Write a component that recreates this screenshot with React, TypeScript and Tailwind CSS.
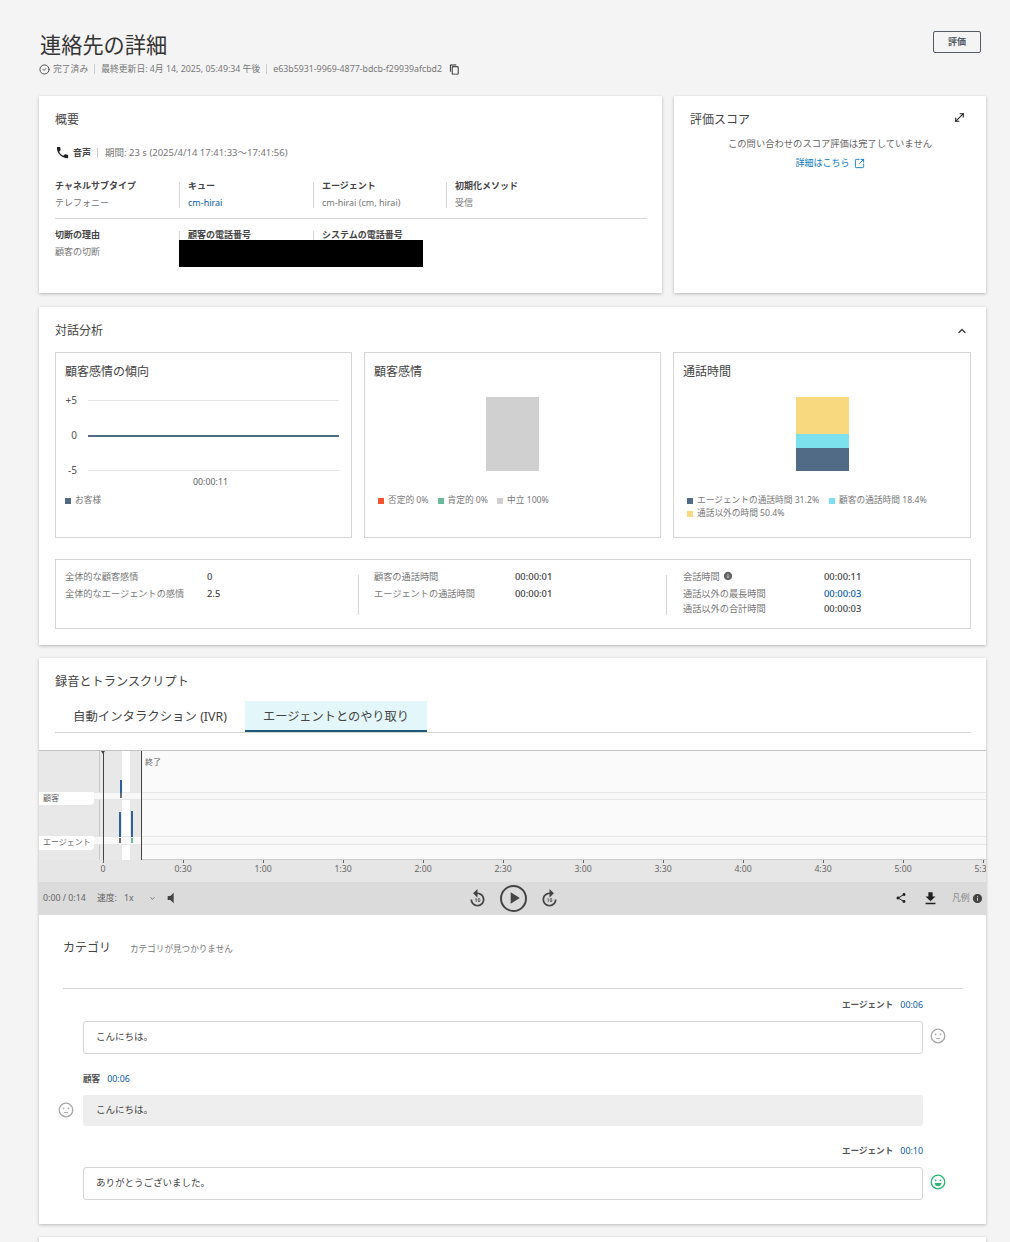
import { ChevronDown, ChevronUp, CircleCheck, MoveDiagonal, SquareArrowOutUpRight } from "lucide-react";
import {
  MdContentCopy,
  MdFileDownload,
  MdForward10,
  MdInfo,
  MdLocalPhone,
  MdPlayArrow,
  MdReplay10,
  MdShare,
  MdVolumeMute,
} from "react-icons/md";

const ticks = ["0", "0:30", "1:00", "1:30", "2:00", "2:30", "3:00", "3:30", "4:00", "4:30", "5:00", "5:30"];

function Card({ className = "", children }: { className?: string; children: React.ReactNode }) {
  return <section className={`bg-white shadow-[0_1px_3px_rgba(0,0,0,0.25)] ${className}`}>{children}</section>;
}

function Field({ label, value, link, width, first }: { label: string; value?: string; link?: boolean; width: string; first?: boolean }) {
  return (
    <div className={`h-[26px] shrink-0 ${width} ${first ? "" : "border-l border-[#d5d5d5] pl-2"}`}>
      <div className="text-[9px] leading-[8px] mt-[-1px] pt-[1px] font-bold text-[#444]">{label}</div>
      {value && <div className={`mt-[7px] text-[9px] leading-[12px] ${link ? "text-[#0a5aa8]" : "text-[#777]"}`}>{value}</div>}
    </div>
  );
}

function Legend({ color, text }: { color: string; text: string }) {
  return (
    <span className="inline-flex items-center gap-[4px] text-[8.7px] leading-[13px] text-[#777] whitespace-nowrap">
      <span className={`w-[6px] h-[6px] ${color}`} />
      {text}
    </span>
  );
}

function ChartRow({ label, strong }: { label: string; strong?: boolean }) {
  return (
    <div className="flex items-center h-[35px]">
      <div className="w-[12px] shrink-0 text-right text-[10px] text-[#555]">{label}</div>
      <div className={`ml-[11px] flex-1 ${strong ? "h-[2px] bg-[#516a86]" : "h-px bg-[#e4e4e4]"}`} />
    </div>
  );
}

function StatRow({ label, value, link, width, info, h = "h-[17px]" }: { label: string; value: string; link?: boolean; width: string; info?: boolean; h?: string }) {
  return (
    <div className={`flex items-center ${h}`}>
      <div className={`${width} shrink-0 flex items-center gap-[3px] text-[9.2px] text-[#777]`}>
        {label}
        {info && <MdInfo className="text-[#666]" size={10} />}
      </div>
      <div className={`pt-[2px] text-[9.4px] font-medium ${link ? "text-[#0a5aa8]" : "text-[#444]"}`}>{value}</div>
    </div>
  );
}

function Face({ happy }: { happy?: boolean }) {
  const c = happy ? "#2bb673" : "#a8a8a8";
  return (
    <svg width="16" height="16" viewBox="0 0 16 16" fill="none">
      <circle cx="8" cy="8" r="6.8" stroke={c} strokeWidth="1.3" />
      <circle cx="5.6" cy="6.3" r="0.9" fill={c} />
      <circle cx="10.4" cy="6.3" r="0.9" fill={c} />
      {happy ? <path d="M4.6 9h6.8c0 2-1.5 3.2-3.4 3.2S4.6 11 4.6 9z" fill={c} /> : <path d="M6 10.6h4" stroke={c} strokeWidth="1" />}
    </svg>
  );
}

function Timeline() {
  return (
    <div className="relative h-[165px] overflow-hidden border-t border-[#c4c4c4] bg-[#e6e6e6]">
      {/* plot */}
      <div className="absolute left-[61px] right-0 top-0 h-[109px] bg-[#fafafa] border-b border-[#cccccc]" />
      <div className="absolute left-0 top-0 w-[102px] h-[109px] bg-[#e8e8e8]" />
      <div className="absolute left-[83px] top-0 w-[8px] h-[109px] bg-white" />
      <div className="absolute left-[60px] top-0 w-px h-[109px] bg-[#c8c8c8]" />

      {/* lanes */}
      <div className="absolute left-0 right-0 top-[41px] h-[8px] bg-[#f8f8f8] border-y border-[#e6e6e6]" />
      <div className="absolute left-0 right-0 top-[85px] h-[9px] bg-[#f8f8f8] border-y border-[#e6e6e6]" />
      <div className="absolute left-0 top-[41px] w-[55px] h-[13px] bg-white rounded-br-[4px] pl-[4px] text-[8px] leading-[11px] text-[#666]">顧客</div>
      <div className="absolute left-0 top-[85px] w-[55px] h-[14px] bg-white rounded-br-[4px] pl-[4px] text-[8px] leading-[11px] text-[#666]">エージェント</div>

      {/* segments */}
      <div className="absolute left-[81px] top-[29px] w-[2px] h-[13px] bg-[#2f5f98]" />
      <div className="absolute left-[81px] top-[42px] w-[2px] h-[5px] bg-[#6f6f6f]" />
      <div className="absolute left-[80px] top-[61px] w-[2px] h-[25px] bg-[#2f5f98]" />
      <div className="absolute left-[80px] top-[87px] w-[2px] h-[5px] bg-[#6f6f6f]" />
      <div className="absolute left-[92px] top-[60px] w-[2px] h-[26px] bg-[#2f5f98]" />
      <div className="absolute left-[92px] top-[87px] w-[2px] h-[5px] bg-[#62bd97]" />

      {/* playhead and end */}
      <div className="absolute left-[64px] top-0 w-px h-[109px] bg-[#444]" />
      <div className="absolute left-[62px] top-0 w-0 h-0 border-x-[2.5px] border-x-transparent border-t-[3px] border-t-[#444]" />
      <div className="absolute left-[102px] top-0 w-px h-[109px] bg-[#444]" />
      <div className="absolute left-[106px] top-[5px] text-[8px] leading-[12px] text-[#666]">終了</div>

      {/* axis */}
      {ticks.map((t, i) => (
        <div key={t} className="absolute top-[109px] w-[40px] flex flex-col items-center" style={{ left: 44 + i * 80 }}>
          <div className="w-px h-[3px] bg-[#666]" />
          <div className="text-[8.7px] leading-[12px] text-[#666]">{t}</div>
        </div>
      ))}

      {/* player controls */}
      <div className="absolute left-0 right-0 bottom-0 h-[33px] bg-[#dbdbdb] flex items-center pb-[1px] text-[8.8px] text-[#666]">
        <span className="ml-[4px] w-[54px] pt-[2px] whitespace-nowrap">0:00 / 0:14</span>
        <span className="w-[27px] pt-[2px]">速度:</span>
        <span className="w-[25px] pt-[2px]">1x</span>
        <ChevronDown size={7} strokeWidth={2.5} className="text-[#555]" />
        <MdVolumeMute size={16} className="ml-[7px] text-[#444]" />
        <div className="ml-[288px] flex items-center text-[#444]">
          <MdReplay10 size={21} />
          <div className="ml-[12px] w-[27px] h-[27px] rounded-full border-[2.5px] border-[#444] flex items-center justify-center">
            <MdPlayArrow size={20} />
          </div>
          <MdForward10 size={21} className="ml-[12px]" />
        </div>
        <MdShare size={12} className="ml-[335px] text-[#222]" />
        <MdFileDownload size={17} className="ml-[15px] text-[#222]" />
        <span className="ml-[13px] pt-[2px] text-[#888]">凡例</span>
        <MdInfo size={11} className="ml-[2px] text-[#444]" />
      </div>
    </div>
  );
}

function Speaker({ name, time, right }: { name: string; time: string; right?: boolean }) {
  return (
    <div className={`flex gap-[7px] text-[8.9px] leading-[12px] ${right ? "justify-end" : ""}`}>
      <span className="font-bold text-[8.6px] text-[#555]">{name}</span>
      <span className="text-[#0a5aa8]">{time}</span>
    </div>
  );
}

export default function App() {
  return (
    <div className="h-[1242px] overflow-hidden bg-[#f4f4f4] pl-[39px] pr-[24px] font-['Noto_Sans','Noto_Sans_CJK_JP',sans-serif]">
      {/* header */}
      <header className="h-[96px] flex justify-between">
        <div className="pt-[31px]">
          <h1 className="ml-[1px] text-[21.2px] leading-[28px] text-[#333]">連絡先の詳細</h1>
          <div className="mt-[4px] flex items-center text-[8.8px] leading-[12px] text-[#777]">
            <CircleCheck size={11} className="text-[#444]" />
            <span className="ml-[3px]">完了済み</span>
            <span className="mx-[6px] w-px h-[10px] bg-[#ccc]" />
            <span>最終更新日: 4月 14, 2025, 05:49:34 午後</span>
            <span className="mx-[6px] w-px h-[10px] bg-[#ccc]" />
            <span>e63b5931-9969-4877-bdcb-f29939afcbd2</span>
            <MdContentCopy size={11} className="ml-[7px] text-[#222]" />
          </div>
        </div>
        <button className="mt-[31px] mr-[5px] w-[48px] h-[22px] border border-[#545b64] rounded-[2px] text-[9px] font-bold text-[#545b64]">評価</button>
      </header>

      <div className="flex flex-col gap-[13px]">
        {/* summary and score */}
        <div className="flex gap-[12px] h-[197px]">
          <Card className="relative w-[623px] px-[16px] pt-[15px]">
            <h2 className="text-[12px] leading-[18px] text-[#444]">概要</h2>
            <div className="mt-[16px] flex items-center text-[9.5px] leading-[12px] text-[#777]">
              <MdLocalPhone size={15} className="text-[#222]" />
              <span className="ml-[3px] font-bold text-[#444] text-[9px]">音声</span>
              <span className="ml-[6px] mr-[7px] w-px h-[10px] bg-[#ccc]" />
              <span>期間: 23 s (2025/4/14 17:41:33〜17:41:56)</span>
            </div>
            <div className="mt-[22px] flex">
              <Field first width="w-[124px]" label="チャネルサブタイプ" value="テレフォニー" />
              <Field width="w-[134px]" label="キュー" value="cm-hirai" link />
              <Field width="w-[133px]" label="エージェント" value="cm-hirai (cm, hirai)" />
              <Field width="w-[120px]" label="初期化メソッド" value="受信" />
            </div>
            <div className="mt-[10px] h-px w-[592px] bg-[#d5d5d5]" />
            <div className="mt-[12px] flex">
              <Field first width="w-[124px]" label="切断の理由" value="顧客の切断" />
              <Field width="w-[134px]" label="顧客の電話番号" />
              <Field width="w-[133px]" label="システムの電話番号" />
            </div>
            <div className="absolute left-[140px] top-[144px] w-[244px] h-[27px] bg-black" />
          </Card>
          <Card className="relative w-[312px] px-[16px] pt-[15px]">
            <h2 className="text-[12px] leading-[18px] text-[#444]">評価スコア</h2>
            <MoveDiagonal size={13} className="absolute right-[20px] top-[15px] text-[#222]" />
            <p className="mt-[8px] text-center text-[9.3px] leading-[14px] text-[#666]">この問い合わせのスコア評価は完了していません</p>
            <div className="mt-[5px] flex items-center justify-center gap-[4px] text-[9px] leading-[14px] text-[#0a7ac4]">
              詳細はこちら
              <SquareArrowOutUpRight size={11} />
            </div>
          </Card>
        </div>

        {/* contact analysis */}
        <Card className="mt-[1px] h-[338px] pl-[16px] pr-[15px] pt-[15px]">
          <div className="flex items-center justify-between">
            <h2 className="text-[12px] leading-[18px] text-[#444]">対話分析</h2>
            <ChevronUp size={12} strokeWidth={2.5} className="mr-[3px] text-[#333]" />
          </div>
          <div className="mt-[12px] flex gap-[12px]">
            <div className="w-[297px] h-[186px] border border-[#d5d5d5] px-[9px] pt-[10px]">
              <h3 className="text-[12px] leading-[18px] text-[#444]">顧客感情の傾向</h3>
              <div className="mt-[2px] pr-[3px]">
                <ChartRow label="+5" />
                <ChartRow label="0" strong />
                <ChartRow label="-5" />
              </div>
              <div className="-mt-[12px] ml-[14px] text-center text-[8.8px] leading-[12px] text-[#666]">00:00:11</div>
              <div className="mt-[6px] flex">
                <Legend color="bg-[#516a86]" text="お客様" />
              </div>
            </div>
            <div className="w-[297px] h-[186px] border border-[#d5d5d5] px-[13px] pt-[10px]">
              <h3 className="-ml-[4px] text-[12px] leading-[18px] text-[#444]">顧客感情</h3>
              <div className="mt-[16px] mx-auto w-[53px] h-[74px] bg-[#d1d0d0]" />
              <div className="mt-[23px] flex gap-[9px]">
                <Legend color="bg-[#f5532d]" text="否定的 0%" />
                <Legend color="bg-[#6bbb9b]" text="肯定的 0%" />
                <Legend color="bg-[#d1d0d0]" text="中立 100%" />
              </div>
            </div>
            <div className="w-[298px] h-[186px] border border-[#d5d5d5] px-[13px] pt-[10px]">
              <h3 className="-ml-[4px] text-[12px] leading-[18px] text-[#444]">通話時間</h3>
              <div className="mt-[16px] mx-auto w-[53px] h-[74px] flex flex-col">
                <div className="h-[37px] bg-[#f8d97f]" />
                <div className="h-[14px] bg-[#7ce1ec]" />
                <div className="flex-1 bg-[#516a86]" />
              </div>
              <div className="mt-[23px] flex flex-wrap gap-x-[10px]">
                <Legend color="bg-[#516a86]" text="エージェントの通話時間 31.2%" />
                <Legend color="bg-[#7ce1ec]" text="顧客の通話時間 18.4%" />
                <Legend color="bg-[#f8d97f]" text="通話以外の時間 50.4%" />
              </div>
            </div>
          </div>
          <div className="mt-[21px] h-[70px] border border-[#d5d5d5] flex pl-[9px] pt-[8px]">
            <div className="w-[293px]">
              <StatRow width="w-[142px]" label="全体的な顧客感情" value="0" />
              <StatRow width="w-[142px]" label="全体的なエージェントの感情" value="2.5" />
            </div>
            <div className="w-[308px] h-[40px] mt-[7px] border-l border-[#d5d5d5] pl-[15px]">
              <div className="-mt-[7px]">
                <StatRow width="w-[141px]" label="顧客の通話時間" value="00:00:01" />
                <StatRow width="w-[141px]" label="エージェントの通話時間" value="00:00:01" />
              </div>
            </div>
            <div className="h-[40px] mt-[7px] border-l border-[#d5d5d5] pl-[16px]">
              <div className="-mt-[7px]">
                <StatRow width="w-[141px]" label="会話時間" value="00:00:11" info />
                <StatRow width="w-[141px]" label="通話以外の最長時間" value="00:00:03" link />
                <StatRow width="w-[141px]" label="通話以外の合計時間" value="00:00:03" h="h-[13px]" />
              </div>
            </div>
          </div>
        </Card>

        {/* recording and transcript */}
        <Card className="h-[566px]">
          <div className="pl-[16px] pr-[15px] pt-[15px]">
            <h2 className="text-[12.2px] leading-[18px] text-[#444]">録音とトランスクリプト</h2>
            <div className="mt-[10px] flex border-b border-[#d5d5d5] h-[32px] pl-[18px]">
              <div className="w-[172px] h-[31px] pt-[2px] flex items-center text-[12.4px] text-[#444] whitespace-nowrap">自動インタラクション (IVR)</div>
              <div className="w-[182px] h-[31px] pt-[4px] flex items-center justify-center bg-[#e3f7fa] border-b-2 border-[#1a5a78] text-[12.2px] text-[#444]">エージェントとのやり取り</div>
            </div>
          </div>
          <div className="mt-[17px]">
            <Timeline />
          </div>

          <div className="pl-[24px] pr-[23px]">
            <div className="pt-[23px] flex h-[74px] items-start border-b border-[#d5d5d5]">
              <span className="text-[12px] leading-[20px] text-[#444]">カテゴリ</span>
              <span className="ml-[19px] mt-[4px] text-[8.6px] leading-[14px] text-[#777]">カテゴリが見つかりません</span>
            </div>
          </div>

          <div className="mt-[10px] pl-[44px] w-[884px]">
            <Speaker name="エージェント" time="00:06" right />
            <div className="mt-[10px] relative h-[33px] pb-[1px] border border-[#d5d5d5] rounded-[3px] pl-[12px] flex items-center text-[9.5px] text-[#444]">
              こんにちは。
              <div className="absolute left-[846px] top-[6px]"><Face /></div>
            </div>
            <div className="mt-[19px]"><Speaker name="顧客" time="00:06" /></div>
            <div className="mt-[10px] relative h-[31px] pb-[1px] bg-[#eeeeee] rounded-[3px] pl-[13px] flex items-center text-[9.5px] text-[#444]">
              こんにちは。
              <div className="absolute -left-[25px] top-[7px]"><Face /></div>
            </div>
            <div className="mt-[19px]"><Speaker name="エージェント" time="00:10" right /></div>
            <div className="mt-[10px] relative h-[33px] pb-[1px] border border-[#d5d5d5] rounded-[3px] pl-[12px] flex items-center text-[9.5px] text-[#444]">
              ありがとうございました。
              <div className="absolute left-[846px] top-[6px]"><Face happy /></div>
            </div>
          </div>
        </Card>

        <Card className="h-[40px]">
          <div />
        </Card>
      </div>
    </div>
  );
}
